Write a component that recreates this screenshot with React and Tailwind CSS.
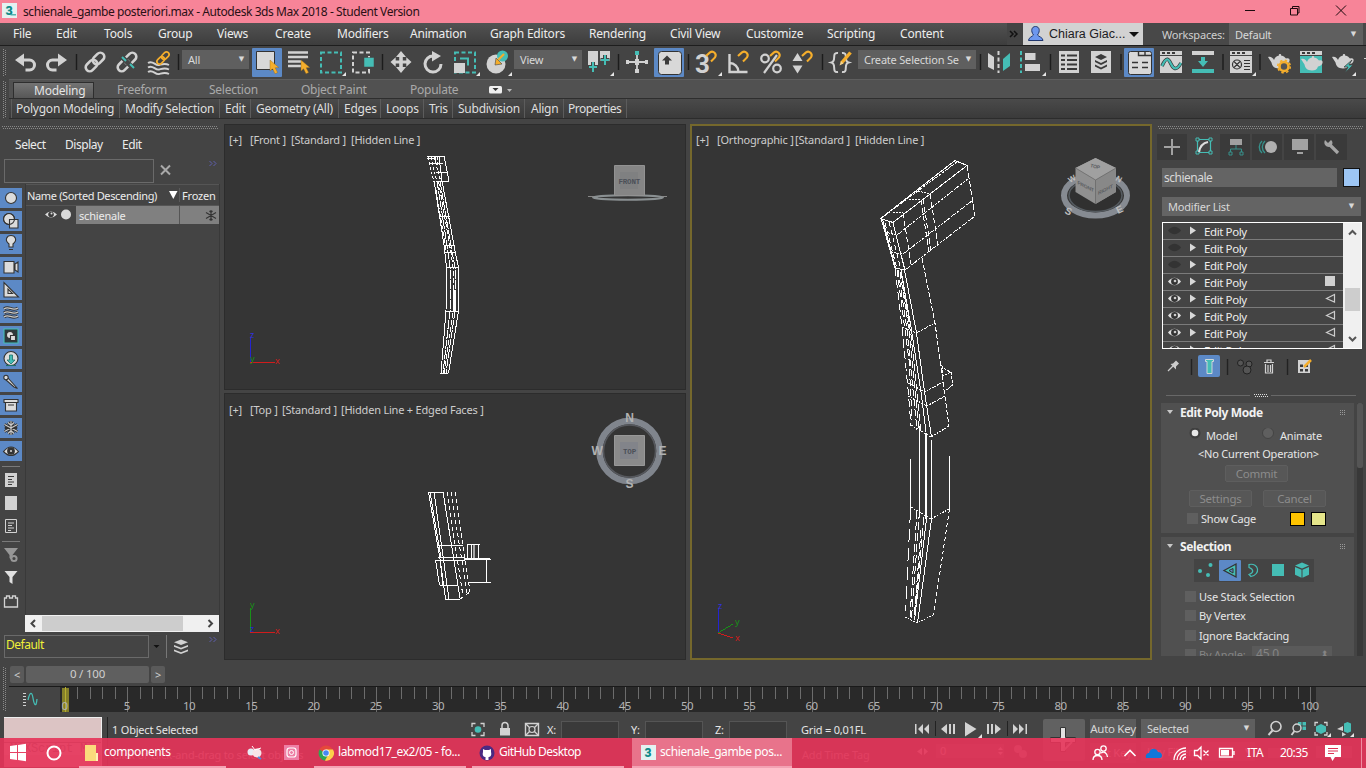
import React from 'react';

const L = '#d2d2d2';
const T = '#45bdb5';
const O = '#f5ae2c';
const D = '#3a3a3a';

// Icons are drawn on the window's own coordinate grid; b is "x y width height".
function Ic({ b, children, className = '' }) {
  const [, , w, h] = b.split(' ');
  return (
    <svg width={w} height={h} viewBox={b} fill="none" className={`block shrink-0 ${className}`}>
      {children}
    </svg>
  );
}

const Corner = ({ x, y }) => <path d={`M${x + 4} ${y}v4h-4z`} fill="#e6e6e6" />;
const Sep = ({ x }) => <path d={`M${x} 54v16`} stroke="#1c1c1c" strokeWidth="1.4" />;
const Cursor = ({ x, y }) => (
  <path d={`M${x} ${y}l0 11 2.6 -2.2 2.4 5 2.6 -1.2 -2.4 -4.8 3.6 -.3z`} fill={O} stroke="#8a6420" strokeWidth=".4" />
);
const Magnet = ({ x, y }) => (
  <path d={`M${x} ${y + 5}l4 -3.6a3.6 3.6 0 0 1 5 5l-4 4`} stroke={O} strokeWidth="2.1" />
);
const Chain = ({ x, c = L, s = 1, y = 62 }) => (
  <g transform={`translate(${x} ${y}) rotate(-45) scale(${s})`} stroke={c} strokeWidth="2.6">
    <rect x="-11.5" y="-4" width="13" height="8" rx="4" />
    <rect x="-1.5" y="-4" width="13" height="8" rx="4" />
  </g>
);
const Teapot = ({ x, y }) => (
  <path
    d={`M${x} ${y + 4}c3 -1 5 1 6 3 1 -3 3 -4 5 -4.500c-1 -2 3 -2 2 0c3 .5 4 2 5 3c5 -2 5 5 -1 6c-1 3 -3 4 -6 4c-5 0 -7 -3 -7.500 -6z`}
    fill={L}
  />
);
const WinBar = ({ x, w = 22 }) => (
  <g>
    <path d={`M${x} 51h${w}v4h-${w}z`} fill={L} />
    <path d={`M${x + 2} 52h3v2h-3zm5 0h3v2h-3zm5 0h3v2h-3z`} fill={D} />
  </g>
);

function Combo({ className = '', children, caret = '▼' }) {
  return (
    <div className={`flex shrink-0 items-center justify-between bg-[#5f5f5f] pl-[6px] pr-[5px] text-[11px] tracking-[-0.2px] text-[#d8d8d8] ${className}`}>
      <span className="whitespace-nowrap">{children}</span>
      <span className="font-['DejaVu_Sans'] text-[7px]">{caret}</span>
    </div>
  );
}

function TitleBar() {
  return (
    <div className="flex h-[23px] shrink-0 items-center bg-[#f78498] text-[#2a1015]">
      <Ic b="0 0 23 23">
        <path d="M2 3h15v15H2z" fill="#e4f2f1" />
        <path d="M10.500 14h5.500v1.500h-5.500z" fill="#55b5b0" />
        <text x="5.500" y="14.500" fontFamily="Roboto" fontWeight="900" fontSize="12.500" fill="#0d8a88">3</text>
      </Ic>
      <span className="whitespace-nowrap pt-px font-['Noto_Sans',sans-serif] text-[12px] tracking-[-0.42px]">
        schienale_gambe posteriori.max - Autodesk 3ds Max 2018 - Student Version
      </span>
      <Ic b="1236 0 130 23" className="ml-auto">
        <path d="M1245 10.500h10M1290.500 8.500h7v6.500h-7zM1292.500 8.500v-2h6.500v6.500h-2M1336 5.500l10 10M1346 5.500l-10 10" stroke="#1c0a0d" />
      </Ic>
    </div>
  );
}

function MenuBar() {
  return (
    <div className="flex h-[23px] shrink-0 items-stretch border-b border-[#1e1e1e] bg-gradient-to-b from-[#525252] to-[#3d3d3d] pl-[13px] text-[12px] tracking-[-0.2px] text-[#ededed]">
      <div className="flex w-[994px] items-center">
        <span className="w-[43px]">File</span>
        <span className="w-[48px]">Edit</span>
        <span className="w-[54px]">Tools</span>
        <span className="w-[59px]">Group</span>
        <span className="w-[58px]">Views</span>
        <span className="w-[62px]">Create</span>
        <span className="w-[73px]">Modifiers</span>
        <span className="w-[80px]">Animation</span>
        <span className="w-[99px] whitespace-nowrap">Graph Editors</span>
        <span className="w-[81px]">Rendering</span>
        <span className="w-[76px] whitespace-nowrap">Civil View</span>
        <span className="w-[81px]">Customize</span>
        <span className="w-[73px]">Scripting</span>
        <span>Content</span>
      </div>
      <div className="flex w-[16px] items-center bg-[#444] pl-[2px]">
        <Ic b="1009 28 10 12">
          <path d="M1010 31l3 3 -3 3M1014 31l3 3 -3 3" stroke="#111" strokeWidth="1.500" />
        </Ic>
      </div>
      <div className="flex w-[120px] items-center bg-[#d2d2d2] font-['Liberation_Sans',sans-serif] text-[12.500px] text-[#1c1c24]">
        <Ic b="1023 23 26 22">
          <path d="M1028.500 40.500c0-3 4-4 5-5.500-3-4-2-8.500 2-8.500s5 4.500 2 8.500c1 1.500 5.500 2.500 5.500 5.500z" fill="#6d97ee" stroke="#20376e" />
        </Ic>
        <span className="whitespace-nowrap tracking-[0px]">Chiara Giac...</span>
        <Ic b="1128 28 12 12" className="ml-auto mr-[3px]"><path d="M1129 32h10l-5 5z" fill="#111" /></Ic>
      </div>
      <div className="flex flex-1 items-center bg-[#484848] pl-[19px] text-[11px] text-[#cfcfcf]">
        <span className="w-[67px]">Workspaces:</span>
        <Combo className="h-full w-[134px] pl-[4px] pr-[7px]">Default</Combo>
      </div>
    </div>
  );
}

function Toolbar() {
  return (
    <div className="flex h-[33px] shrink-0 items-start bg-[#444] pt-0">
      <Ic b="0 46 182 33">
        <path d="M3.500 49v27M5.500 50v26" stroke="#8a8a8a" strokeDasharray="1 1" />
        <path d="M22 60h7.500a5 5 0 0 1 0 10h-4M59.500 60h-7a5 5 0 0 0 0 10h4" stroke={L} strokeWidth="3" />
        <path d="M15 60l9-6.500v13zM67 60l-9-6.500v13z" fill={L} />
        <Sep x="76.500" />
        <Chain x={95} />
        <Chain x={127} />
        <path d="M121 56l12 12" stroke="#444" strokeWidth="5" />
        <path d="M122 57l4 4M130 64l4 4" stroke={T} strokeWidth="2" />
        <path d="M148 63c5-3 7 3 11 2s6-2 10 0M148 67.500c5-3 7 3 11 2s6-2 10 0M148 72c5-3 7 3 11 2s6-2 10 0" stroke={L} strokeWidth="1.900" />
        <Chain x={163} y={58} c={O} s={0.65} />
        <Sep x="178.500" />
      </Ic>
      <Combo className="mt-[4px] h-[19px] w-[67px]">All</Combo>
      <Ic b="249 46 265 33">
        <rect x="252" y="48" width="30" height="29" rx="1" fill="#5c89c6" />
        <path d="M256.500 51.500h18v18h-18z" fill="#d8d8d8" stroke="#333" />
        <Cursor x={270} y={60} />
        <path d="M288 52.500h20M288 57h20M288 61.500h13M288 66h13" stroke={L} strokeWidth="2.400" />
        <Cursor x={301} y={60} />
        <path d="M321 52.500h20v20h-20z" stroke={T} strokeWidth="2" strokeDasharray="4 2.500" />
        <Corner x={342} y={72} />
        <path d="M353 52.500h16v20h-16z" stroke={L} strokeWidth="2" strokeDasharray="4 2.500" />
        <path d="M364 57.500h10v9.500h-10z" fill={T} stroke="#444" strokeWidth=".5" />
        <Sep x="382.500" />
        <path d="M401 51l5 6h-3.200v3.500h3.500v-3.300l5.200 4.800-5.200 4.800v-3.300h-3.500v3.500h3.200l-5 6-5-6h3.200v-3.500h-3.500v3.300l-5.200-4.800 5.200-4.800v3.300h3.500v-3.500h-3.200z" fill={L} />
        <path d="M433.500 56a8 8 0 1 0 7.500 8" stroke={L} strokeWidth="3" />
        <path d="M432 51l9 5-9 5.500z" fill={L} />
        <path d="M455 52.500h20v20h-20z" stroke={T} strokeWidth="2" strokeDasharray="4 2.500" />
        <path d="M460 58.500h8v7" stroke={T} strokeWidth="2" />
        <path d="M454 63h11v10h-11z" fill={L} />
        <Corner x={476} y={72} />
        <circle cx="496" cy="64" r="9.500" fill={L} />
        <circle cx="502.500" cy="56" r="5.500" fill={T} />
        <path d="M504 54l-6 6" stroke={O} strokeWidth="2.200" />
        <path d="M495 65l1-7 6 6z" fill={O} stroke="#444" strokeWidth=".6" />
        <Corner x={508} y={72} />
      </Ic>
      <Combo className="mt-[4px] h-[19px] w-[68px]">View</Combo>
      <Ic b="582 46 276 33">
        <path d="M588 51h10v14h-10zM600 51h10v10h-10z" fill={L} />
        <path d="M593 62v10M588.500 67h9M605 55v10M600.500 60h9" stroke="#444" strokeWidth="4" />
        <path d="M593 62v10M589 67h8M605 55v10M601 60h8" stroke={T} strokeWidth="2" />
        <Corner x={610} y={72} />
        <Sep x="618.500" />
        <path d="M637 55v17M627 62h20" stroke={L} strokeWidth="1.800" />
        <path d="M635 59h4v6h-4zM626 60h3v4h-3zM645 60h3v4h-3zM635 69h4v4h-4z" fill={L} />
        <path d="M635 51h4v4h-4z" fill={T} />
        <rect x="654" y="48" width="30" height="29" rx="1" fill="#5c89c6" />
        <rect x="658.500" y="51.500" width="23" height="23" rx="3" fill="#d8d8d8" stroke="#333" />
        <path d="M667 55.500l5 5h-3v4h-4v-4h-3z" fill="#3a3a3a" />
        <Sep x="688.500" />
        <text x="695" y="73" fontFamily="Roboto" fontWeight="700" fontSize="26" fill={L}>3</text>
        <Magnet x={706} y={51} />
        <Corner x={718} y={72} />
        <path d="M729.500 54v18h18M729.500 63a9 9 0 0 1 9 9" stroke={L} strokeWidth="2.400" />
        <Magnet x={738} y={51} />
        <circle cx="765" cy="58.500" r="3.800" stroke={L} strokeWidth="2.200" />
        <circle cx="777" cy="68.500" r="3.800" stroke={L} strokeWidth="2.200" />
        <path d="M777 55l-13 18" stroke={L} strokeWidth="2.200" />
        <Magnet x={770} y={51} />
        <path d="M792.500 61l5-8 5 8zM792.500 65.500l5 8 5-8z" fill={L} />
        <Magnet x={802} y={51} />
        <Sep x="822.500" />
        <path d="M838 53c-7-1-1 8-6.500 9.500 5.500 1.500-.5 10.500 6.500 9.500M842 53c7-1 1 8 6.500 9.500-5.500 1.500.5 10.500-6.500 9.500" stroke={L} strokeWidth="2" />
        <path d="M850.500 52.500l-9 10.500" stroke={O} strokeWidth="3.400" />
        <path d="M841 61l2.500 2.500-4 2z" fill="#f6d48a" />
      </Ic>
      <Combo className="mt-[4px] h-[19px] w-[118px] pl-[4px]">Create Selection Se</Combo>
      <Ic b="976 46 390 33">
        <Sep x="980.500" />
        <path d="M988 53l6 4v13l-6-3zM988 53" fill={L} />
        <path d="M1010 53l-7 6v12l7-5z" fill={T} />
        <path d="M998.500 51v22" stroke={L} strokeWidth="2" strokeDasharray="4 2.500" />
        <path d="M1021 51v22" stroke={T} strokeWidth="2" strokeDasharray="4 2.500" />
        <path d="M1025 53h10.500v7h-10.500zM1025 64h15v7h-15z" fill={L} />
        <Corner x={1042} y={72} />
        <Sep x="1050.500" />
        <path d="M1059 51h20v22h-20zM1091 51h20v22h-20z" fill={L} />
        <path d="M1061 55.500h4M1067 55.500h10M1061 60h4M1067 60h10M1061 64.500h4M1067 64.500h10M1061 69h4M1067 69h10" stroke={D} strokeWidth="2" />
        <path d="M1101 54l6 3-6 3-6-3zM1101 63l6-3v2l-6 3-6-3v-2zM1101 67.500l6-3v2l-6 3-6-3v-2z" fill={D} />
        <Sep x="1121" />
        <rect x="1124" y="48" width="30" height="29" rx="1" fill="#5c89c6" />
        <rect x="1128.500" y="51.500" width="23" height="23" rx="2" fill="#d8d8d8" stroke="#333" />
        <path d="M1138.500 52v3.500h13M1145 52v3.500M1132 62.500h6M1142 62.500h6M1132 67.500h6M1142 67.500h6" stroke="#333" strokeWidth="1.400" />
        <WinBar x={1160} />
        <path d="M1160 56h22v17h-22z" fill={L} />
        <path d="M1162 66c5-11 7-6 9-2s5 8 10-1" stroke="#333" strokeWidth="3.600" />
        <path d="M1162 66c5-11 7-6 9-2s5 8 10-1" stroke={T} strokeWidth="2.200" />
        <path d="M1192 51h22v4h-22z" fill={L} />
        <path d="M1192 69h22v4h-22zM1201 57h4v4h3l-5 6-5-6h3z" fill={T} />
        <Sep x="1223" />
        <WinBar x={1230} />
        <path d="M1230 56h22v17h-22z" fill={L} />
        <circle cx="1237" cy="64.500" r="4.500" stroke="#333" strokeWidth="1.200" />
        <path d="M1234 61.500l6 6M1240 61.500l-6 6M1244 60.500h6M1244 63.500h6M1244 66.500h6M1244 69.500h6" stroke="#333" strokeWidth="1.100" />
        <Corner x={1252} y={72} />
        <Sep x="1260" />
        <Teapot x={1268} y={53} />
        <circle cx="1284" cy="66.500" r="4.500" fill="#555" stroke={O} strokeWidth="2.600" />
        <circle cx="1284" cy="66.500" r="6.300" stroke={O} strokeWidth="1.500" strokeDasharray="2.500 2.450" />
        <WinBar x={1300} />
        <path d="M1300 56h22v17h-22z" fill={T} />
        <Teapot x={1301} y={55} />
        <Teapot x={1332} y={53} />
        <path d="M1352 60l-8 7h4l-3 6 8-8h-4z" fill={T} stroke="#444" strokeWidth=".8" />
        <Corner x={1352} y={72} />
        <path d="M1364 58.500h2" stroke={L} />
      </Ic>
    </div>
  );
}

function Ribbon() {
  const cell = 'flex h-full items-center border-r border-[#5c5c5c] whitespace-nowrap';
  return (
    <div className="flex h-[45px] shrink-0 bg-[#444] text-[12px] tracking-[-0.25px]">
      <Ic b="0 79 9 45"><path d="M3.500 81v37M5.500 82v36" stroke="#8a8a8a" strokeDasharray="1 1" /></Ic>
      <div className="flex flex-1 flex-col">
        <div className="flex h-[20px] border-b border-[#2e2e2e] border-t border-t-[#5e5e5e] bg-[#515151] pl-[4px] text-[#a9a9a9]">
          <div className="mt-[2px] flex w-[81px] items-center border border-b-0 border-[#2e2e2e] bg-gradient-to-b from-[#747474] to-[#575757] pl-[20px] text-[#e4e4e4]">Modeling</div>
          <span className="flex w-[115px] items-center pl-[23px] pt-[2px]">Freeform</span>
          <span className="flex w-[92px] items-center pt-[2px]">Selection</span>
          <span className="flex w-[109px] items-center whitespace-nowrap pt-[2px]">Object Paint</span>
          <span className="flex w-[76px] items-center pt-[2px]">Populate</span>
          <Ic b="486 80 30 18">
            <rect x="489" y="86" width="13" height="7.500" rx="1.500" fill="#eee" />
            <path d="M492.500 88h6l-3 3z" fill="#333" />
            <path d="M507 89h5l-2.500 3z" fill="#bbb" />
          </Ic>
        </div>
        <div className="flex h-[20px] items-center border-b border-[#2c2c2c] bg-gradient-to-b from-[#4a4a4a] to-[#3a3a3a] pl-[2px] text-[#dedede]">
          <span className={`w-[109px] border-l pl-[4px] ${cell}`}>Polygon Modeling</span>
          <span className={`w-[100px] pl-[5px] ${cell}`}>Modify Selection</span>
          <span className={`w-[31px] pl-[5px] ${cell}`}>Edit</span>
          <span className={`w-[88px] pl-[5px] ${cell}`}>Geometry (All)</span>
          <span className={`w-[42px] pl-[5px] ${cell}`}>Edges</span>
          <span className={`w-[43px] pl-[5px] ${cell}`}>Loops</span>
          <span className={`w-[29px] pl-[5px] ${cell}`}>Tris</span>
          <span className={`w-[72px] pl-[5px] ${cell}`}>Subdivision</span>
          <span className={`w-[39px] pl-[6px] ${cell}`}>Align</span>
          <span className={`w-[63px] pl-[4px] tracking-[-0.5px] ${cell}`}>Properties</span>
        </div>
      </div>
    </div>
  );
}

function StripIcons() {
  const tiles = [188, 211, 234, 257, 280, 303, 326, 349, 372, 395, 418, 441];
  return (
    <Ic b="0 184 25 448">
      {tiles.map((y) => <path key={y} d={`M0 ${y}h22v20h-22z`} fill="#5c89c6" />)}
      <g stroke="#333" strokeWidth="1.100" fill="#dcdcdc">
        <circle cx="11" cy="198" r="5.500" />
        <circle cx="9" cy="219" r="5.500" />
        <path d="M9.500 219.500h8.500v8.500h-8.500z" />
        <circle cx="9" cy="219" r="5.500" fill="none" />
        <path d="M9 247v-3c-5-4-2-8.500 2-8.500s7 4.500 2 8.500v3zM9 249.500h4" />
        <path d="M4 261.500h10v11.500h-10zM15 264l3-2v10l-3-2z" />
        <path d="M4 282.500v14.500h14.500zM8 289v4.500h4.500z" />
        <path d="M4 309c5-4 8 3 14-1M4 313c5-4 8 3 14-1M4 317c5-4 8 3 14-1" stroke="#333" strokeWidth="3" fill="none" />
        <path d="M4 309c5-4 8 3 14-1M4 313c5-4 8 3 14-1M4 317c5-4 8 3 14-1" stroke="#ccc" strokeWidth="1.300" fill="none" />
        <path d="M4 329h14v14h-14z" fill="#2d3a3c" stroke={T} />
        <circle cx="10" cy="335" r="3.500" />
        <path d="M10.500 335.500h5v5h-5z" />
        <circle cx="11" cy="358.500" r="7" />
        <path d="M9.500 355h3v5h2.500l-4 4-4-4h2.500z" fill={T} stroke="#1e6e69" strokeWidth=".8" />
        <path d="M6 365.500h10" stroke="#1e6e69" />
        <path d="M8 378l9.500 10.500-3.500-1.500-8-7z" />
        <circle cx="6" cy="377.500" r="2.200" />
        <path d="M4 399.500h14v3h-14zM5.500 402.500h11v8.500h-11zM8 405h6" />
        <path d="M3.500 451.500q7.500-9 15 0q-7.500 8-15 0z" />
        <circle cx="11" cy="451" r="3.300" fill="#333" />
      </g>
      <path d="M11 421v14M4.500 424.500l13 7M4.500 431.500l13-7M8 422.500l3 3 3-3M8 433.500l3-3 3 3M5 427l2 1-2 1M17 427l-2 1 2 1" stroke="#333" strokeWidth="2.600" />
      <path d="M11 421v14M4.500 424.500l13 7M4.500 431.500l13-7M8 422.500l3 3 3-3M8 433.500l3-3 3 3" stroke="#ccc" strokeWidth="1.100" />
      <circle cx="11" cy="451" r="1" fill="#ddd" />
      <path d="M2 466.500h18M2 541.500h18" stroke="#7a7a7a" />
      <path d="M5 473h12v14h-12zM5 496h12v14h-12z" fill={L} />
      <path d="M8 476.500h6M8 479.500h4M8 482h6M8 484.500h4" stroke={D} />
      <path d="M5.500 519.500h11v13h-11z" stroke={L} />
      <path d="M8 523h6M8 525.500h4M8 528h6M8 530.500h3" stroke={L} />
      <path d="M4 548h14l-5.500 7v6l-3-3v-3z" fill="#979797" />
      <circle cx="14" cy="558.500" r="2.600" stroke="#979797" strokeWidth="2" fill="#444" />
      <path d="M4.500 571h13l-5 6v7l-3-2v-5z" fill="#e0e0e0" />
      <path d="M4.500 607v-9h2v-2h3v2h3v-2h3v2h2v9z" stroke={L} strokeWidth="1.300" />
    </Ic>
  );
}

const Chevrons = () => (
  <Ic b="208 158 10 9"><path d="M209.500 160l2.500 2.500-2.500 2.500M213.500 160l2.500 2.500-2.500 2.500" stroke="#5f5fae" /></Ic>
);

function Explorer() {
  return (
    <div className="flex w-[224px] shrink-0 flex-col bg-[#444] text-[#ececec]">
      <Ic b="0 124 224 6"><path d="M2 126.500h216M3 128.500h215" stroke="#888" strokeDasharray="1 1" /></Ic>
      <div className="flex h-[30px] shrink-0 items-center pl-[15px] text-[12px] tracking-[-0.45px]">
        <span className="w-[50px]">Select</span>
        <span className="w-[57px]">Display</span>
        <span>Edit</span>
      </div>
      <div className="-mt-px flex h-[25px] pl-[4px]">
        <div className="h-[24px] w-[150px] border border-[#6a6a6a]" />
        <Ic b="154 159 54 24"><path d="M161 165.500l9 9M170 165.500l-9 9" stroke="#a9a9a9" strokeWidth="2" /></Ic>
        <Chevrons />
      </div>
      <div className="flex h-[448px]">
        <StripIcons />
        <div className="flex w-[195px] flex-col border-x border-[#393939]">
          <div className="flex h-[22px] items-center border-y border-[#555] pl-[1px]">
            <span className="w-[141px] whitespace-nowrap tracking-[-0.35px]">Name (Sorted Descending)</span>
            <Ic b="168 188 12 14"><path d="M169 191h8.500l-4.200 8z" fill="#fff" /><path d="M179.500 188v14" stroke="#5a5a5a" /></Ic>
            <span className="pl-[2px]">Frozen</span>
          </div>
          <div className="flex h-[18px]">
            <Ic b="26 206 50 18">
              <path d="M45 214.500q6-6 12 0q-6 6-12 0z" fill="#ddd" />
              <circle cx="51" cy="214.500" r="2.800" fill="#3a3a3a" />
              <circle cx="51.500" cy="213.500" r="1" fill="#ddd" />
              <circle cx="66" cy="214.500" r="5" fill="#dadada" />
            </Ic>
            <div className="flex w-[104px] items-center border-r border-[#555] bg-[#808080] pl-[3px]">schienale</div>
            <div className="flex flex-1 items-center justify-end bg-[#808080] pr-[1px]">
              <Ic b="204 209 14 13"><path d="M211 210v11M206 212.500l10 6M206 218.500l10-6M209.500 211l1.500 1.500 1.500-1.500M209.500 220l1.500-1.500 1.500 1.500" stroke="#333" strokeWidth="1.100" /></Ic>
            </div>
          </div>
          <div className="flex-1" />
          <div className="-ml-px flex h-[17px] w-[194px] items-center bg-[#f0f0f0]">
            <Ic b="25 615 17 17"><path d="M35 620l-3.500 3.500 3.500 3.500" stroke="#444" strokeWidth="2" /></Ic>
            <div className="h-[15px] w-[141px] bg-[#cdcdcd]" />
            <Ic b="183 615 35 17"><path d="M208.500 620l3.500 3.500-3.500 3.500" stroke="#444" strokeWidth="2" /></Ic>
          </div>
        </div>
      </div>
      <div className="flex flex-1 items-start pl-[4px] pt-[3px]">
        <div className="flex h-[23px] w-[145px] items-center border border-[#6a6a6a] pb-[3px] pl-[1px] text-[12px] tracking-[-0.5px] text-[#f0f03a]">Default</div>
        <Ic b="149 635 59 23">
          <path d="M153.500 645h6l-3 3z" fill="#111" />
          <path d="M166.500 635v23" stroke="#777" />
          <path d="M181 639.500l7 2.800-7 2.800-7-2.800z" fill={L} />
          <path d="M174 645l7 2.800 7-2.800v1.800l-7 2.800-7-2.800zM174 649.500l7 2.800 7-2.800v1.800l-7 2.800-7-2.800z" fill={L} />
        </Ic>
        <Chevrons />
      </div>
    </div>
  );
}

function Axes({ x, y, v, k, diag }) {
  return (
    <g strokeWidth="1" shapeRendering="crispEdges" fontFamily="Noto Sans" fontSize="9">
      <path d={`M${x + 0.5} ${y}v-24`} stroke={v === 'z' ? '#2424d0' : '#189018'} />
      {diag ? (
        <g>
          <path d={`M${x} ${y}l15 -9`} stroke="#189018" />
          <path d={`M${x} ${y}l15 5`} stroke="#d01c1c" />
          <text x={x + 17} y={y - 8} fill="#189018">y</text>
          <text x={x + 17} y={y + 8} fill="#d01c1c">x</text>
        </g>
      ) : (
        <g>
          <path d={`M${x} ${y + 0.5}h25`} stroke="#d01c1c" />
          <text x={x + 25} y={y + 2} fill="#d01c1c">x</text>
          <text x={x} y={y} fill={k === 'y' ? '#189018' : '#2424d0'}>{k}</text>
        </g>
      )}
      <text x={x} y={y - 24} fill={v === 'z' ? '#3232e0' : '#189018'}>{v}</text>
    </g>
  );
}

function Label({ parts, className = '' }) {
  return (
    <div className={`absolute left-[4px] flex whitespace-nowrap text-[11px] leading-none tracking-[-0.2px] text-[#cdcdcd] ${className}`}>{parts}</div>
  );
}

function FrontView() {
  return (
    <div className="relative h-[266px] overflow-hidden border border-[#2c2c2c] bg-[#353535]">
      <Ic b="225 125 460 264">
        <g stroke="#fff" shapeRendering="crispEdges">
          <path d="M427 156.500h17M427 158.500h8M429 163.500h14M436 172.500h12M436 181.500h13M444 156l5 25M439 157l3 24M435 163v-6" />
          <path d="M428 157l6 25M431 157l6 25M434 157l7 25M437 157v8" strokeDasharray="3 2" />
          <path d="M434 181l10 64 2.500 22-.5 44-5 62M442 181l14 75 2.500 11v44l-10 62" />
          <path d="M437 181l10 64 3 22v44l-7 62M440 181l12 71 3 15v44l-9 62" strokeDasharray="9 1" />
          <path d="M438.500 181l13 75 1.500 11v44l-9 62M436 190l10 60" strokeDasharray="5 2" />
          <path d="M454.500 290v22" strokeWidth="3" />
          <path d="M440 216.500h10M444 245.500h11M444 252.500h12M446 267.500h12M445 311.500h13M440 373.500h8" />
        </g>
        <ellipse cx="628" cy="197.500" rx="35" ry="2.200" stroke="#8a9092" strokeWidth="2" />
        <path d="M588 196.500h6M662 196.500h5" stroke="#888" />
        <path d="M614.500 165.500h30v30h-30z" fill="#858585" stroke="#929292" />
        <path d="M620 172h18v17h-18z" fill="#7f8081" />
        <text x="618.500" y="184" fontFamily="Liberation Mono" fontWeight="700" fontSize="7.500" fill="#4c5058">FRONT</text>
        <Axes x={250} y={362} v="z" k="y" />
      </Ic>
      <Label className="top-[9px]" parts={<><span className="w-[21px]">[+]</span><span className="w-[41px]">[Front ]</span><span className="w-[60px]">[Standard ]</span><span>[Hidden Line ]</span></>} />
    </div>
  );
}

function TopView() {
  return (
    <div className="relative h-[267px] overflow-hidden border border-[#2c2c2c] bg-[#353535]">
      <Ic b="225 394 460 265">
        <g stroke="#fff" shapeRendering="crispEdges">
          <path d="M428 492.500h15M445 599.500h15M428.500 492l12 70 5 37M434 492l15 107M443 492l17 106M430 492l11 66" />
          <path d="M447 492l16 104M451 492l16 101M455 492l15 100M460 599l10-7" strokeDasharray="4 3" />
          <path d="M437 545.500h26M438 557.500h26M435 560.500h30M440 585.500h17M435.500 560l4 25M440 560l3 25" />
          <path d="M467 544.500h13M467.500 544v14M471.500 544v14M478.500 544v14M486.500 559v23M468 582.500h23M464 559.500h27" />
          <path d="M474 545v13" stroke="#aaa" strokeWidth="2" />
          <path d="M464 558.500h26" />
        </g>
        <circle cx="629.500" cy="451" r="30" stroke="#80858d" strokeWidth="6.500" />
        <circle cx="629.500" cy="451" r="26" stroke="#56585d" strokeWidth="1.500" />
        <path d="M614.500 435.500h30v30h-30z" fill="#8b8b8b" stroke="#989898" />
        <path d="M620 442h18v17h-18z" fill="#82848a" />
        <g fontFamily="Liberation Sans" fontWeight="700" fill="#b2b2b2" fontSize="12" textAnchor="middle">
          <text x="629.500" y="422">N</text>
          <text x="629.500" y="488">S</text>
          <text x="597" y="455">W</text>
          <text x="662.500" y="455">E</text>
          <text x="629.500" y="454" fontSize="7.500" fontFamily="Liberation Mono" fill="#4c5058">TOP</text>
        </g>
        <Axes x={250} y={632} v="y" k="z" />
      </Ic>
      <Label className="top-[10px]" parts={<><span className="w-[21px]">[+]</span><span className="w-[32px]">[Top ]</span><span className="w-[59px]">[Standard ]</span><span>[Hidden Line + Edged Faces ]</span></>} />
    </div>
  );
}

function OrthoView() {
  return (
    <div className="relative h-[536px] overflow-hidden border-2 border-[#75682c] bg-[#353535]">
      <Ic b="692 126 458 532">
        <g stroke="#fff" shapeRendering="crispEdges">
          <path d="M880.500 218.500L955 160.500l12 5L893 222.500zM881 218l14 50M882.500 219l13 49M893 222.500l12 48M895 268l10 2" />
          <path d="M884 216L957 162M897 235l72-57M903 254l70-54M905 270l70-54" strokeDasharray="3 1" />
          <path d="M967 165l8 51" strokeDasharray="6 2" />
          <path d="M903 213l8 51M921 200l8 52M923 199l8 51M930 194l8 51M885 223l12 46M889 222l12 48" strokeDasharray="5 3" />
          <path d="M893 212l10 1M909 199l12 1M918 191l12 3M885 232l12 3M891 252l12 2" strokeDasharray="2 1" />
          <path d="M922 258l13 65 7 52 7 51" strokeDasharray="5 2" />
          <path d="M895 268l7 59 6 62 3 37" strokeDasharray="8 4" />
          <path d="M904.500 270l12 63 8 59 7 45M901 270l10 57 10 65 5 40M901 272l9 50" />
          <path d="M898 270l9 60 10 100M900 272l9 58 10 100M903 285l8 50 10 95M897 270l12 90 3 60" strokeDasharray="7 3" />
          <path d="M902 327l14 6 19-10M908 383l17 9 18-10M908 396l19 10 18-10M911 425l20 12 18-11M911 507l20 12 18-10M905 617l12 6 16-8" strokeDasharray="2 1" />
          <path d="M942 366l1 10 8-4-5-2zM951 372l2 13-7 5" strokeDasharray="3 1" />
          <path d="M910.500 459v52M919.500 426v92M931.500 440v79M949.500 456v54" />
          <path d="M926 433v86" strokeWidth="2" />
          <path d="M931.500 519l-14 104M926.500 519l-12 101" />
          <path d="M910.500 510l-5 101" strokeDasharray="13 6" />
          <path d="M917 511l-7 106M919.500 511l-8 107M924 517l-10 103M921 530l-7 90" strokeDasharray="8 3" />
          <path d="M949.500 509l-16 106" strokeDasharray="4 3" />
        </g>
        <ellipse cx="1095.500" cy="195.500" rx="31.500" ry="20" stroke="#868b92" strokeWidth="6" />
        <ellipse cx="1095.500" cy="195.500" rx="26.500" ry="16" fill="#303030" stroke="#555b60" strokeWidth="1.500" />
        <path d="M1095.500 158l20.500 10v24l-20.500 12-20-12v-24z" fill="#909090" />
        <path d="M1095.500 158l20.500 10-20.500 12-20-12z" fill="#a0a0a0" />
        <path d="M1095.500 180v24l20.500-12v-24z" fill="#888" />
        <path d="M1075.500 168l20 12 20.500-12M1095.500 180v24" stroke="#6a6a6a" strokeWidth=".8" />
        <g fontFamily="Liberation Sans" fontWeight="700" fontSize="5" fill="#5c5e62">
          <text transform="translate(1077.500 184) skewY(27)">FRONT</text>
          <text transform="translate(1098 195) skewY(-27)">RIGHT</text>
          <text transform="translate(1090 167) rotate(14)">TOP</text>
        </g>
        <g fontFamily="Liberation Sans" fontWeight="700" fontSize="10" fill="#bdbdbd">
          <text transform="translate(1064 213) rotate(25)">S</text>
          <text transform="translate(1118 214) rotate(-25)">E</text>
          <text transform="translate(1070 183) rotate(-30)" fontSize="8">W</text>
          <text transform="translate(1115 180) rotate(30)" fontSize="8">N</text>
        </g>
        <Axes x={718} y={633} v="z" diag />
      </Ic>
      <Label className="top-[8px]" parts={<><span className="w-[21px]">[+]</span><span className="w-[78px]">[Orthographic ]</span><span className="w-[60px]">[Standard ]</span><span>[Hidden Line ]</span></>} />
    </div>
  );
}

const stack = [
  [false, ''],
  [false, ''],
  [false, ''],
  [true, 'sq'],
  [true, 'tri'],
  [true, 'tri'],
  [true, 'tri'],
  [true, 'tri'],
];

function StackRow({ on, mark }) {
  return (
    <div className="flex h-[17px] shrink-0 items-center border-b border-[#7b7b7b]">
      <Ic b="0 0 41 16">
        <path d="M5 7.500q6.500-7.500 13 0q-6.500 7.500-13 0z" fill={on ? '#dedede' : '#333'} />
        {on && <circle cx="11.500" cy="7.500" r="3.400" fill="#333" />}
        {on && <circle cx="12" cy="7" r="1.300" fill="#ccc" />}
        <path d="M27 3.500l6 4-6 4z" fill="#d8d8d8" />
      </Ic>
      <span className="pt-[2px] text-[11.500px] tracking-[-0.4px] text-[#ececec]">Edit Poly</span>
      <Ic b="0 0 20 16" className="ml-auto">
        {mark === 'sq' && <path d="M2 2h10v10h-10z" fill="#d0d0d0" />}
        {mark === 'tri' && <path d="M3.500 7.500l8-4v7.500z" stroke="#ccc" strokeWidth="1.200" />}
      </Ic>
    </div>
  );
}

const Box = () => <span className="mr-[3px] block h-[11px] w-[11px] shrink-0 bg-[#5f5f5f]" />;
const Grip = () => (
  <Ic b="0 0 6 6" className="ml-auto mr-[8px]"><path d="M0 .5h6M0 2.500h6M0 4.500h6" stroke="#999" strokeDasharray="1 1" /></Ic>
);

function Rollout({ title, className, children }) {
  return (
    <div className={`flex w-[193px] shrink-0 flex-col overflow-hidden bg-[#505050] ${className}`}>
      <div className="flex h-[19px] shrink-0 items-center pl-[6px]">
        <Ic b="0 0 13 8"><path d="M0 1h6l-3 4z" fill="#c8c8c8" /></Ic>
        <span className="pt-px text-[12px] font-bold tracking-[-0.4px] text-[#f2f2f2]">{title}</span>
        <Grip />
      </div>
      {children}
    </div>
  );
}

function CommandPanel() {
  const tab = 'mr-[2px] block';
  const btn = 'flex h-[17px] items-center justify-center rounded-[2px] border border-[#5e5e5e] bg-[#575757] text-[11.500px] text-[#8c8c8c]';
  return (
    <div className="flex flex-1 flex-col bg-[#444] pl-[5px]">
      <Ic b="1157 124 209 10"><path d="M1158 126.500h205M1159 128.500h204" stroke="#888" strokeDasharray="1 1" /></Ic>
      <div className="flex h-[26px]">
        <Ic b="1157 134 30 26" className={`${tab} bg-[#3a3a3a]`}><path d="M1172 139v16M1164 147h16" stroke="#a2a2a2" strokeWidth="2" /></Ic>
        <Ic b="1189 134 29 26" className={`${tab} bg-[#444]`}>
          <path d="M1197.500 139.500h13v13h-13z" stroke={T} strokeWidth="1.200" />
          <path d="M1196 138h3v3h-3zM1209 138h3v3h-3zM1196 151h3v3h-3zM1209 151h3v3h-3z" fill="#444" stroke={T} />
          <path d="M1199 152c1-6 4-9 9-10" stroke="#ddd" strokeWidth="2.200" />
        </Ic>
        <Ic b="1220 134 30 26" className={`${tab} bg-[#3a3a3a]`}>
          <path d="M1230 139h12v6h-12z" fill="#a0a0a0" />
          <path d="M1236 145v4M1230.500 152v-3h11v3M1229 152h3v3h-3zM1240 152h3v3h-3z" stroke="#36908a" />
        </Ic>
        <Ic b="1252 134 30 26" className={`${tab} bg-[#3a3a3a]`}>
          <circle cx="1271" cy="147" r="6" fill="#b0b0b0" />
          <path d="M1265 141a8 8 0 0 0 0 12M1262 141a8 8 0 0 0 0 12" stroke="#36908a" strokeWidth="1.400" />
        </Ic>
        <Ic b="1284 134 30 26" className={`${tab} bg-[#3a3a3a]`}><path d="M1292 139h16v11h-16zM1297 152h6v2h-6z" fill="#a2a2a2" /></Ic>
        <Ic b="1316 134 31 26" className="bg-[#3a3a3a]">
          <path d="M1329 144l9 9" stroke="#a5a5a5" strokeWidth="3.200" />
          <path d="M1325 140l3 3 3-3c3 2 1 7-2 7s-6-3-4-7z" fill="#a5a5a5" />
        </Ic>
      </div>
      <div className="flex h-[27px] items-end pl-[5px]">
        <div className="flex h-[19px] w-[175px] items-center bg-[#646464] pl-[2px] text-[12px] tracking-[-0.5px] text-[#d8d8d8]">schienale</div>
        <div className="ml-[6px] h-[19px] w-[17px] border border-[#111] bg-[#9dc6f4]" />
      </div>
      <Combo className="ml-[5px] mt-[10px] h-[19px] w-[199px] bg-[#646464] pl-[2px] pr-[7px]">Modifier List</Combo>
      <div className="ml-[5px] mt-[6px] flex h-[127px] w-[200px] border border-white bg-[#444]">
        <div className="flex flex-1 flex-col overflow-hidden">
          {stack.map(([on, mark], i) => <StackRow key={i} on={on} mark={mark} />)}
        </div>
        <div className="flex w-[18px] flex-col items-center bg-[#f0f0f0]">
          <Ic b="0 0 17 65"><path d="M5 11.500l3.500-3.500 3.500 3.500" stroke="#555" strokeWidth="2" /></Ic>
          <div className="h-[23px] w-[15px] bg-[#cdcdcd]" />
          <Ic b="0 88 17 37"><path d="M5 114l3.500 3.500 3.500-3.500" stroke="#555" strokeWidth="2" /></Ic>
        </div>
      </div>
      <Ic b="1157 349 209 54">
        <path d="M1168 371l5-5" stroke="#ccc" strokeWidth="1.300" />
        <path d="M1170.500 364l5.500 5.500 0-3 3-3-3-3-3 3z" fill="#ccc" />
        <path d="M1191.500 359v16M1227.500 359v16M1287.500 359v16" stroke="#222" strokeWidth="1.400" />
        <rect x="1198" y="355" width="22" height="22" rx="2" fill="#5c89c6" />
        <path d="M1205.500 359.500h8v2h-1.500v12h-5v-12h-1.500z" fill={T} stroke="#ddd" strokeWidth=".9" />
        <g stroke="#222" fill="#555">
          <circle cx="1240.500" cy="363" r="3" /><circle cx="1249" cy="364" r="3" /><circle cx="1247" cy="370" r="4" />
        </g>
        <path d="M1264 362.500h10M1267 362v-2h4v2M1265.500 364v9h7v-9M1268 365v7M1270.500 365v7" stroke={L} strokeWidth="1.200" />
        <path d="M1298 360h12v13h-12z" fill={L} />
        <path d="M1300 364.500h3v2.500h-3zM1305 364.500h3v2.500h-3zM1300 369h3v2.500h-3zM1305 369h3v2.500h-3z" fill={D} />
        <path d="M1311 360l-7 7" stroke={O} strokeWidth="2.500" />
        <path d="M1166 395.500h84M1271 395.500h85" stroke="#686868" />
        <path d="M1254 394.500h13M1255 396.500h13" stroke="#ddd" strokeDasharray="1 1" />
      </Ic>
      <div className="flex h-[253px] pl-[4px]">
        <div className="flex h-[253px] flex-col gap-[4px] text-[#e6e6e6]">
          <Rollout title="Edit Poly Mode" className="h-[130px]">
            <div className="flex h-[22px] items-center pl-[28px] pt-[4px]">
              <Ic b="0 0 17 12" className="-mt-[3px]"><circle cx="6" cy="5" r="5.500" fill="#3f3f3f" /><circle cx="6" cy="5" r="3.300" fill="#e8e8e8" /></Ic>
              <span className="w-[56px]">Model</span>
              <Ic b="0 0 18 12" className="-mt-[3px]"><circle cx="6" cy="5" r="5.500" fill="#5f5f5f" stroke="#444" /></Ic>
              <span>Animate</span>
            </div>
            <div className="flex h-[17px] items-center pl-[37px] pt-[2px]">&lt;No Current Operation&gt;</div>
            <div className={`ml-[64px] mt-[4px] w-[63px] ${btn}`}>Commit</div>
            <div className="mt-[8px] flex gap-[11px] pl-[28px]">
              <div className={`w-[63px] ${btn}`}>Settings</div>
              <div className={`w-[63px] ${btn}`}>Cancel</div>
            </div>
            <div className="mt-[3px] flex h-[17px] items-center pl-[26px]">
              <Box />
              <span className="w-[89px]">Show Cage</span>
              <span className="block h-[14px] w-[15px] border border-black bg-[#ffc400]" />
              <span className="ml-[6px] block h-[14px] w-[15px] border border-black bg-[#e5e58a]" />
            </div>
          </Rollout>
          <Rollout title="Selection" className="h-[119px]">
            <div className="ml-[33px] mt-[3px] h-[23px] w-[120px] shrink-0 bg-[#444]">
              <Ic b="1194 559 120 23">
                <g fill={T}>
                  <circle cx="1200" cy="571" r="2" /><circle cx="1210.500" cy="565" r="2" /><circle cx="1208" cy="575" r="2" />
                  <path d="M1272 564h12v12h-12z" />
                  <path d="M1302 562.500l7 3-7 3-7-3zM1295 567l6.500 2.700v8l-6.500-3zM1309 567l-6.500 2.700v8l6.500-3z" />
                </g>
                <rect x="1219" y="560" width="22" height="21" rx="1" fill="#5c89c6" />
                <path d="M1224 570.500l12-6.500v13z" fill={T} stroke="#333" strokeWidth="1.300" />
                <path d="M1229 570.500l4-2v4.500z" fill="#5c89c6" stroke="#333" strokeWidth="1" />
                <path d="M1249 564.500c10-2 12 10 2 12l-2-2c5-2 5-5 0-7z" stroke={T} strokeWidth="1.200" />
              </Ic>
            </div>
            <div className="mt-[4px] flex h-[20px] shrink-0 items-center pl-[24px]"><Box />Use Stack Selection</div>
            <div className="flex h-[19px] shrink-0 items-center pl-[24px]"><Box />By Vertex</div>
            <div className="flex h-[20px] shrink-0 items-center pl-[24px]"><Box />Ignore Backfacing</div>
            <div className="flex h-[18px] shrink-0 items-center pl-[24px] text-[#858585]">
              <Box /><span className="w-[53px]">By Angle:</span>
              <span className="flex h-[16px] w-[80px] items-center justify-between bg-[#5a5a5a] px-[4px] text-[12px]">45.0 <span className="font-['DejaVu_Sans'] text-[9px]">⬍</span></span>
            </div>
          </Rollout>
        </div>
        <div className="ml-[3px] w-[6px] bg-[#383838]"><div className="h-[65px] rounded-[2px] bg-[#555]" /></div>
      </div>
    </div>
  );
}

function Timeline() {
  const ticks = Array.from({ length: 101 }, (_, i) => i);
  return (
    <div className="flex h-[52px] shrink-0 bg-[#444]">
      <Ic b="0 660 9 52"><path d="M3.500 667v44M5.500 668v43" stroke="#8a8a8a" strokeDasharray="1 1" /></Ic>
      <div className="flex flex-1 flex-col text-[#cfcfcf]">
        <div className="flex h-[26px] items-center gap-[2px] pl-px pt-[2px]">
          <span className="flex h-[17px] w-[14px] items-center justify-center rounded-[2px] bg-[#5a5a5a]">&lt;</span>
          <span className="flex h-[17px] w-[123px] items-center justify-center rounded-[2px] bg-[#5f5f5f] text-[11.500px]">0 / 100</span>
          <span className="flex h-[17px] w-[14px] items-center justify-center rounded-[2px] bg-[#5a5a5a]">&gt;</span>
        </div>
        <div className="flex h-[26px] border-t border-[#1a1a1a]">
          <Ic b="9 686 51 25">
            <path d="M23 692.500h3M23 695.500h3M23 698.500h3M23 701.500h3M23 704.500h3" stroke={L} />
            <path d="M28 699c2-9 4-8 5-2s3 11 4 1" stroke={T} strokeWidth="1.300" />
          </Ic>
          <Ic b="60 686 1306 25">
            <path d="M60 686h1256v25h-1256z" fill="#292929" />
            <path d="M62 687h7v24h-7z" fill="#85802a" />
            {ticks.map((i) => {
              const x = Math.round(65 + i * 12.45) + 0.5;
              return <path key={i} d={`M${x} 686v${i % 5 ? 12 : 25}`} stroke={i ? '#6c6c6c' : '#b5ad30'} />;
            })}
            <g fontFamily="Noto Sans" fontSize="11.500" fill="#b4b4b4" textAnchor="middle" letterSpacing="-0.6">
              {ticks.filter((i) => i % 5 === 0).map((i) => (
                <text key={i} x={64.500 + i * 12.45} y="708.500">{i}</text>
              ))}
            </g>
          </Ic>
        </div>
      </div>
    </div>
  );
}

function StatusBar() {
  const field = 'h-[18px] w-[58px] border border-[#555] bg-[#3a3a3a]';
  return (
    <div className="flex h-[56px] shrink-0 bg-[#444] pt-[5px] text-[#e6e6e6]">
      <div className="ml-[4px] flex h-[50px] w-[98px] flex-col border-r border-t border-[#eee] bg-[#dcc4c4]">
        <div className="h-[24px]" />
        <span className="overflow-hidden whitespace-nowrap border-t border-[#777] bg-[#e8d8d8] pl-[6px] font-['Liberation_Mono',monospace] text-[12px] text-[#777]">MAXScript Mi</span>
      </div>
      <div className="ml-[5px] flex w-[363px] flex-col border-l border-[#222] pl-[4px]">
        <span className="flex h-[25px] items-center">1 Object Selected</span>
        <span className="flex h-[25px] items-center text-[#ccc]">Click or click-and-drag to select objects</span>
      </div>
      <div className="flex w-[444px] flex-col">
        <div className="flex h-[25px] items-center">
          <Ic b="470 717 77 25">
            <path d="M472 727v-3.500h3.500M480.500 723.500h3.500v3.500M484 732v3.500h-3.500M475.500 735.500h-3.500v-3.500" stroke={L} strokeWidth="1.300" />
            <circle cx="478" cy="729.500" r="3.300" fill={T} />
            <path d="M500 728h10v7.500h-10z" fill={L} />
            <path d="M502 728v-2.500a3 3 0 0 1 6 0v2.500" stroke={L} strokeWidth="1.500" />
            <path d="M525.500 723.500h13v12h-13z" stroke={L} strokeWidth="1.400" />
            <circle cx="532" cy="729.500" r="3" stroke={L} strokeWidth="1.200" />
            <path d="M526 724l3.500 3.500M538 724l-3.500 3.500M526 735l3.500-3.500M538 735l-3.500-3.500" stroke={L} strokeWidth="1.400" />
          </Ic>
          <span className="w-[14px]">X:</span><span className={field} />
          <span className="ml-[12px] w-[14px]">Y:</span><span className={field} />
          <span className="ml-[12px] w-[14px]">Z:</span><span className={field} />
          <span className="ml-[14px] whitespace-nowrap">Grid = 0,01FL</span>
        </div>
        <span className="flex h-[25px] items-center pl-[332px] text-[#bbb]">Add Time Tag</span>
      </div>
      <div className="flex w-[129px] flex-col">
        <Ic b="914 717 129 25">
          <g fill={L}>
            <path d="M915 724h1.500v10h-1.500zM923 724v10l-5-5zM929 724v10l-5-5z" />
            <path d="M947 724v10l-6-5zM949 724h2v10h-2zM953 724h2v10h-2z" />
            <path d="M965 722l11.500 7-11.500 7.500z" />
            <path d="M987 724h2v10h-2zM991 724h2v10h-2zM995 724l6 5-6 5z" />
            <path d="M1013 724l5 5-5 5zM1019 724l5 5-5 5zM1025.500 724h1.500v10h-1.500z" />
          </g>
          <Corner x={978} y={734} />
          <path d="M935.500 721v15M1007.500 721v15" stroke="#222" />
        </Ic>
        <Ic b="914 742 129 25">
          <path d="M922 748v7l-5-3.500zM924 748v7l4-3.500z" fill={L} />
          <path d="M936 744h68v14h-68z" fill="#5f5f5f" />
          <circle cx="1018" cy="749" r="4" fill="#999" /><circle cx="1023" cy="754" r="4" fill="#999" />
          <text x="940" y="755" fontSize="11" fontFamily="Noto Sans" fill="#ccc">0</text>
          <path d="M998 750l2.500-3 2.500 3zM998 752l2.500 3 2.500-3z" fill="#ccc" />
        </Ic>
      </div>
      <div className="mt-[2px] h-[42px] w-[42px] rounded-[2px] bg-[#616161]">
        <Ic b="1043 719 42 42">
          <path d="M1060.500 727.500h5v10h10v5h-10v9h-5v-9h-10v-5h10z" fill="#e2e2e2" stroke="#333" />
          <path d="M1072 742l-8 8" stroke="#ccc" strokeWidth="2" />
        </Ic>
      </div>
      <div className="ml-[5px] mt-[2px] flex w-[46px] flex-col gap-[4px] whitespace-nowrap text-[11.500px] tracking-[-0.3px] text-[#d8d8d8]">
        <span className="flex h-[20px] items-center justify-center bg-[#5c5c5c]">Auto Key</span>
        <span className="flex h-[20px] items-center justify-center bg-[#5c5c5c]">Set Key</span>
      </div>
      <div className="ml-[5px] mt-[2px] flex w-[114px] flex-col gap-[4px]">
        <Combo className="h-[19px] w-[114px] pl-[5px] pr-[6px]">Selected</Combo>
        <Combo className="h-[19px] w-[114px]">Key Filters...</Combo>
      </div>
      <Ic b="1255 717 111 50">
        <circle cx="1276" cy="726.500" r="5" stroke={L} strokeWidth="1.600" />
        <path d="M1272.500 730.500l-4 4.500" stroke={L} strokeWidth="2" />
        <path d="M1298 722h3.500v3.500h-3.500zM1302.500 722h3.500v3.500h-3.500zM1302.500 726.500h3.500v3.500h-3.500z" fill={T} />
        <circle cx="1297" cy="728" r="4" stroke={L} strokeWidth="1.500" />
        <path d="M1294.500 731l-3 4" stroke={L} strokeWidth="1.800" />
        <path d="M1315 726v-3.500h3M1324 722.500h3v3.500M1327 732v3h-3M1318 735h-3v-3" stroke={L} strokeWidth="1.300" />
        <path d="M1321 724l5 2.500v5l-5 2.500-5-2.500v-5z" fill={T} />
        <Corner x={1327} y={733} />
        <path d="M1344 723.500l3.500-1.500 3.500 1.500v8l-3.500 1.500-3.500-1.500z" fill={T} />
        <path d="M1337 729l6-3v5zM1342 732l4 2.500-4 2z" fill={L} />
        <Corner x={1350} y={733} />
        <path d="M1268 748h14v10h-14zM1292 748h14v10h-14zM1316 746h14v12h-14zM1338 746h14v12h-14z" fill="#666" />
      </Ic>
    </div>
  );
}

function Taskbar() {
  const item = 'flex h-full items-center whitespace-nowrap border-b-2 border-[#f3a3b4]';
  return (
    <div className="absolute inset-x-0 bottom-0 flex h-[30px] items-center bg-[#e63459]/91 font-['Noto_Sans',sans-serif] text-[12px] tracking-[-0.4px] text-white">
      <Ic b="0 738 79 30">
        <path d="M10 746l7-1v7h-7zM18 745l8-1.200v8.200h-8zM10 753h7v7l-7-1zM18 753h8v8.200l-8-1.200z" fill="#fff" />
        <circle cx="54" cy="753" r="6.500" stroke="#fff" strokeWidth="2" />
      </Ic>
      <div className={`w-[147px] ${item}`}>
        <Ic b="79 738 25 28"><path d="M85 745h11v9h2v7h-13z" fill="#fbdb7c" /><path d="M96 753h2v8h-2z" fill="#fff0b8" /></Ic>
        components
      </div>
      <Ic b="226 738 88 30">
        <circle cx="251" cy="752" r="3.500" fill="#e8ecf5" /><circle cx="257" cy="753" r="4.500" fill="#f8e4e8" />
        <path d="M252 746l3 4 6-2" stroke="#fff" /><path d="M258 757l3 2" stroke="#4a90e2" strokeWidth="2" />
        <path d="M284 745h15v15h-15z" fill="#ee7fa6" /><rect x="287" y="748" width="9" height="9" rx="2.500" stroke="#fff" strokeWidth="1.200" /><circle cx="291.500" cy="752.500" r="2" stroke="#fff" />
      </Ic>
      <div className={`w-[152px] ${item}`}>
        <Ic b="314 738 24 28">
          <circle cx="326" cy="753" r="7.500" fill="#e5483b" />
          <path d="M319.500 749.500a7.500 7.500 0 0 0 5.500 11l3-5-2-2z" fill="#2fa652" />
          <path d="M326 749.500h7a7.500 7.500 0 0 1-8 11l4-7z" fill="#fcd04a" />
          <circle cx="326" cy="753" r="3.600" fill="#fff" /><circle cx="326" cy="753" r="2.800" fill="#4688f1" />
        </Ic>
        labmod17_ex2/05 - fo...
      </div>
      <div className={`ml-[6px] w-[152px] ${item}`}>
        <Ic b="472 738 27 28">
          <circle cx="487" cy="753" r="7.500" fill="#4a2a82" />
          <path d="M483 749l2 1h4l2-1v3c1 4-1 5-2.500 5v3h-3v-3c-1.500 0-3.500-1-2.500-5z" fill="#fff" />
        </Ic>
        <span className="tracking-[-0.55px]">GitHub Desktop</span>
      </div>
      <div className={`ml-[8px] w-[160px] bg-[#e8738b] ${item}`}>
        <Ic b="632 738 28 28">
          <path d="M641 745h15v15h-15z" fill="#e4f2f1" />
          <text x="644.500" y="756.500" fontFamily="Roboto" fontWeight="900" fontSize="12" fill="#0d8a88">3</text>
        </Ic>
        schienale_gambe pos...
      </div>
      <Ic b="1085 738 162 30" className="ml-auto">
        <g stroke="#fff" strokeWidth="1.300">
          <circle cx="1097.500" cy="752" r="2.700" /><path d="M1093 760c0-6 9-6 9 0" />
          <circle cx="1103.500" cy="748.500" r="2.700" /><path d="M1101 753c3-2 6-.5 6.500 4" />
          <path d="M1124.500 756l5.500-5.500 5.500 5.500" strokeWidth="1.600" />
          <path d="M1174 760a12 12 0 0 1 12-12M1177 760a9 9 0 0 1 9-9M1180 760a6 6 0 0 1 6-6M1183 760a3 3 0 0 1 3-3" />
          <path d="M1194.500 750.500h3l3.500-3.500v12l-3.500-3.500h-3zM1203.500 750.500l5 5M1208.500 750.500l-5 5" />
          <path d="M1219.500 748.500h13v8.500h-13zM1234 751v4" />
        </g>
        <path d="M1221 750h8v5.500h-8z" fill="#fff" />
        <path d="M1146 758c-1-4 2-5 3-5 1-5 7-6 9-1 5 0 5 6 2 6z" fill="#1177d8" />
      </Ic>
      <span className="w-[33px]">ITA</span>
      <span className="w-[37px] tracking-[-0.6px]">20:35</span>
      <Ic b="1317 738 49 30">
        <path d="M1325 745h16v12h-6l-2.500 4-2-4h-5.500z" fill="#fff" />
        <path d="M1328 748.500h10M1328 751h10M1328 753.500h6" stroke="#dd3054" />
        <path d="M1361.500 738v30" stroke="#f08aa0" />
      </Ic>
    </div>
  );
}

export default function App() {
  return (
    <div className="relative flex h-[768px] w-[1366px] flex-col overflow-hidden bg-[#444] font-['Noto_Sans',sans-serif] text-[11px] leading-none tracking-[-0.2px]">
      <TitleBar />
      <MenuBar />
      <Toolbar />
      <Ribbon />
      <div className="flex h-[536px] shrink-0">
        <Explorer />
        <div className="flex w-[928px] shrink-0 gap-[4px]">
          <div className="flex w-[462px] flex-col gap-[3px]">
            <FrontView />
            <TopView />
          </div>
          <div className="w-[462px]"><OrthoView /></div>
        </div>
        <CommandPanel />
      </div>
      <Timeline />
      <StatusBar />
      <Taskbar />
    </div>
  );
}
